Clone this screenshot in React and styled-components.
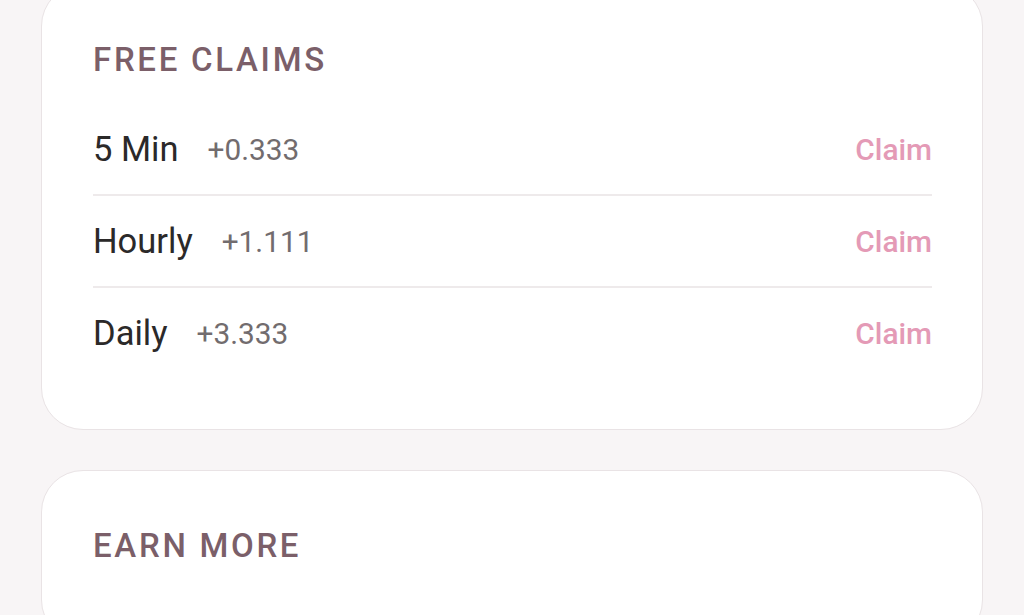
import React from 'react';
import styled, { createGlobalStyle } from 'styled-components';

const GlobalStyle = createGlobalStyle`
  html, body {
    margin: 0;
    padding: 0;
    background: #f8f5f6;
    font-family: Roboto, "Liberation Sans", sans-serif;
    overflow: hidden;
  }
`;

const Page = styled.main`
  display: flex;
  flex-direction: column;
  gap: 40px;
  padding: 0 41px;
  margin-top: -16px;
`;

const Card = styled.section`
  background: #fff;
  border: 1px solid #e9e3e5;
  border-radius: 42px;
  padding: 52px 50px 51px 51px;
`;

const Title = styled.h2`
  margin: 0;
  font-size: 33px;
  line-height: 46px;
  font-weight: 500;
  letter-spacing: 2.7px;
  color: #7b5f69;
`;

const List = styled.ul`
  list-style: none;
  margin: 21px 0 0;
  padding: 0;
`;

const Row = styled.li`
  display: flex;
  align-items: center;
  height: 90px;
  border-top: ${({ first }) => (first ? 'none' : '2px solid #eeeaeb')};
`;

const Label = styled.span`
  font-size: 34.5px;
  color: #2b2929;
  margin-right: 29px;
`;

const Amount = styled.span`
  font-size: 29.8px;
  color: #726c6e;
  flex: 1;
`;

const ClaimButton = styled.button`
  border: none;
  background: none;
  padding: 0;
  font-family: inherit;
  font-size: 29.8px;
  font-weight: 500;
  color: #e49ab6;
  cursor: pointer;
`;

const claims = [
  { label: '5 Min', amount: '+0.333' },
  { label: 'Hourly', amount: '+1.111' },
  { label: 'Daily', amount: '+3.333' },
];

const App = () => (
  <>
    <GlobalStyle />
    <Page>
      <Card>
        <Title>FREE CLAIMS</Title>
        <List>
          {claims.map((claim, idx) => (
            <Row key={ claim.label } first={ idx === 0 }>
              <Label>{ claim.label }</Label>
              <Amount>{ claim.amount }</Amount>
              <ClaimButton type="button">Claim</ClaimButton>
            </Row>
          ))}
        </List>
      </Card>
      <Card>
        <Title>EARN MORE</Title>
        <List />
      </Card>
    </Page>
  </>
);

export default App;
